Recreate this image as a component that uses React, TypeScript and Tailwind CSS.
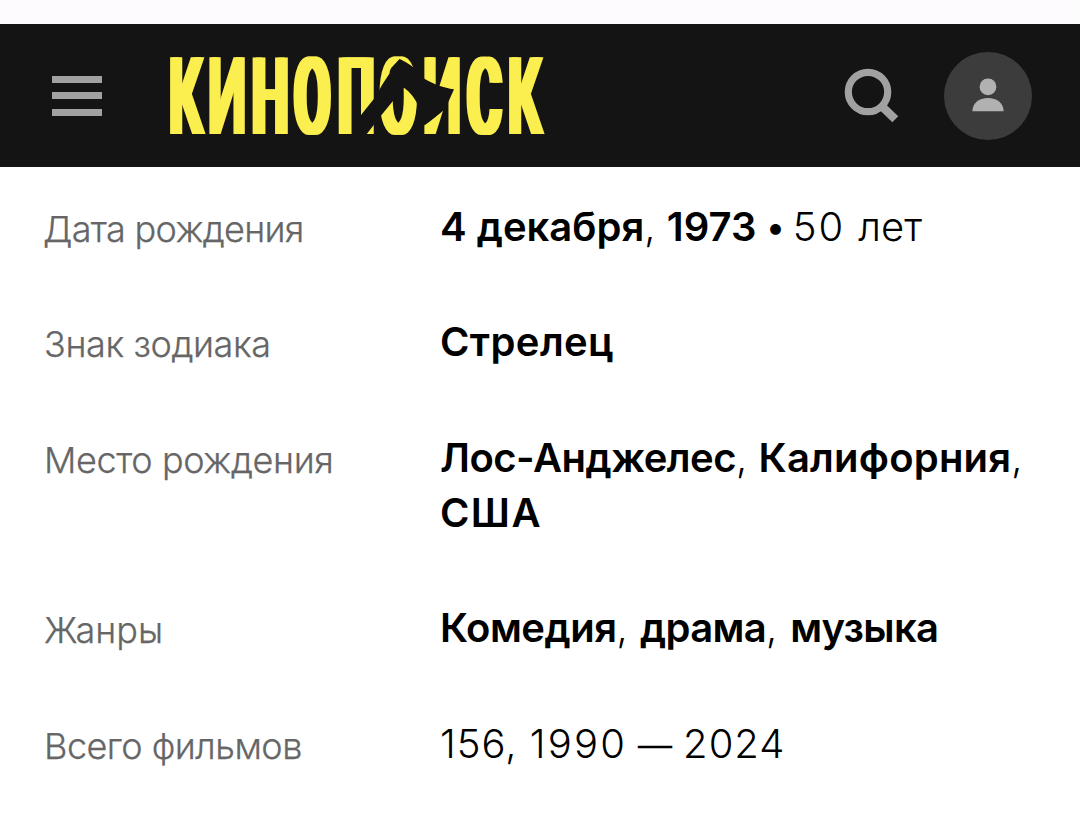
import type { ReactNode } from "react";

const K_SHAPE = "scale-x-[0.48] [text-shadow:-6px_0_0_#fbee4f,6px_0_0_#fbee4f]";
const I_SHAPE = "scale-x-[0.51] [text-shadow:-4.5px_0_0_#fbee4f,4.5px_0_0_#fbee4f]";
const STEM_SHAPE = "scale-x-[0.47] [text-shadow:-7px_0_0_#fbee4f,7px_0_0_#fbee4f]";
const ROUND_SHAPE = "scale-x-[0.48] [text-shadow:-7px_0_0_#fbee4f,7px_0_0_#fbee4f]";

const LOGO_LETTERS = [
  { glyph: "К", box: "w-[35px] -ml-px", shape: K_SHAPE },
  { glyph: "И", box: "w-[36px] ml-[6px]", shape: I_SHAPE },
  { glyph: "Н", box: "w-[36px] ml-[7px]", shape: STEM_SHAPE },
  { glyph: "О", box: "w-[37px] ml-[6px]", shape: ROUND_SHAPE },
  { glyph: "П", box: "w-[36px] ml-[7px]", shape: STEM_SHAPE },
  { glyph: "О", box: "w-[37px] ml-[6px]", shape: ROUND_SHAPE },
  { glyph: "И", box: "w-[36px] ml-[7px]", shape: I_SHAPE },
  { glyph: "С", box: "w-[36px] ml-[6px]", shape: ROUND_SHAPE },
  { glyph: "К", box: "w-[36px] ml-[5px]", shape: K_SHAPE },
];

function Logo() {
  return (
    <div className="relative ml-[67px] flex h-[78px] w-[376px] shrink-0 font-[Roboto,sans-serif] text-[108px] leading-[80px] font-medium text-[#fbee4f]">
      {LOGO_LETTERS.map(({ glyph, box, shape }, i) => (
        <span key={i} className={`flex shrink-0 justify-center ${box}`}>
          <span className={`block origin-center ${shape}`}>{glyph}</span>
        </span>
      ))}
      <svg className="absolute top-0 left-px" width="376" height="78" viewBox="170 57 376 78" fill="#141414">
        <path d="M399.500 59C404 61 410 64.500 413 67C417 71 421 76 424 78.500C433 84 444 88 454 89.300C450 98 448 104 444 110C438 115 432 120 425 125L418.500 125V106C415 98 410 92 404 87.700L395 98.500L381.500 115L366 135H353V125L361 115L375 97.500L382 85L389.500 73.500C389.500 70 391 68 393 66Z" />
      </svg>
    </div>
  );
}

function Header() {
  return (
    <header className="flex h-[143px] items-center bg-[#141414] pr-12 pl-[52px]">
      <div className="flex h-10 w-[50px] shrink-0 flex-col justify-between">
        <span className="h-[7px] bg-[#a1a1a1]" />
        <span className="h-[7px] bg-[#a1a1a1]" />
        <span className="h-[7px] bg-[#a1a1a1]" />
      </div>
      <Logo />
      <svg className="ml-auto" width="56" height="56" viewBox="0 0 56 56" fill="none" stroke="#a1a1a1">
        <circle cx="25" cy="24" r="19.700" strokeWidth="7.200" />
        <path d="M38 37.500 52.300 51.300" strokeWidth="8.500" />
      </svg>
      <div className="ml-[45px] flex size-[88px] items-center justify-center rounded-full bg-[#3c3c3c]">
        <svg className="-mt-0.5" width="32" height="34" viewBox="0 0 32 34" fill="#b1b1b1">
          <circle cx="16" cy="8.800" r="8.400" />
          <path d="M.4 33.300C.4 25 7 20 16 20S31.600 25 31.600 33.300Z" />
        </svg>
      </div>
    </header>
  );
}

function Row({ label, tracking, className, children }: { label: string; tracking: string; className: string; children: ReactNode }) {
  return (
    <div className={`flex items-baseline whitespace-nowrap ${className}`}>
      <div className={`w-[396px] shrink-0 translate-y-px text-[36px] font-light text-[#666] [-webkit-text-stroke:0.25px_#666] ${tracking}`}>
        {label}
      </div>
      <div className="text-[40px] leading-[55px] font-light">{children}</div>
    </div>
  );
}

function B({ className = "", children }: { className?: string; children: ReactNode }) {
  return <span className={`font-[580] ${className}`}>{children}</span>;
}

export default function App() {
  return (
    <div className="h-[840px] w-[1080px] overflow-hidden bg-white font-[Inter,sans-serif] text-black">
      <div className="h-6 bg-[#fefbff]" />
      <Header />
      <main className="flex flex-col pt-8 pl-11">
        <Row label="Дата рождения" tracking="tracking-[-0.7px] -ml-px mr-px" className="h-[115px]">
          <B>4 декабря</B>, <B>1973</B>
          <span className="mr-[6px] ml-[8px]">•</span>
          <span className="mr-[13px] tracking-[2px]">50</span>
          <span>лет</span>
        </Row>
        <Row label="Знак зодиака" tracking="tracking-[-0.4px]" className="h-[116px]">
          <B className="tracking-[0.4px]">Стрелец</B>
        </Row>
        <Row label="Место рождения" tracking="tracking-[-0.4px]" className="h-[170px]">
          <B className="tracking-[-0.5px]">Лос-Анджелес</B>, <B className="tracking-[0.2px]">Калифорния</B>,<br />
          <B className="tracking-[1.4px]">США</B>
        </Row>
        <Row label="Жанры" tracking="tracking-[0px]" className="h-[116px]">
          <B className="tracking-[-0.5px]">Комедия</B>
          <span className="tracking-[0.5px]">, </span>
          <B className="tracking-[-0.7px]">драма</B>
          <span className="tracking-[0.9px]">, </span>
          <B className="tracking-[-0.7px]">музыка</B>
        </Row>
        <Row label="Всего фильмов" tracking="tracking-[-0.5px]" className="h-[80px]">
          <span className="tracking-[1px]">156, </span>
          <span className="tracking-[2.2px]">1990</span>
          <span className="mr-[11px] ml-[11px] text-[34px] [-webkit-text-stroke:0.4px]">—</span>
          <span className="tracking-[1px]">2024</span>
        </Row>
      </main>
    </div>
  );
}
